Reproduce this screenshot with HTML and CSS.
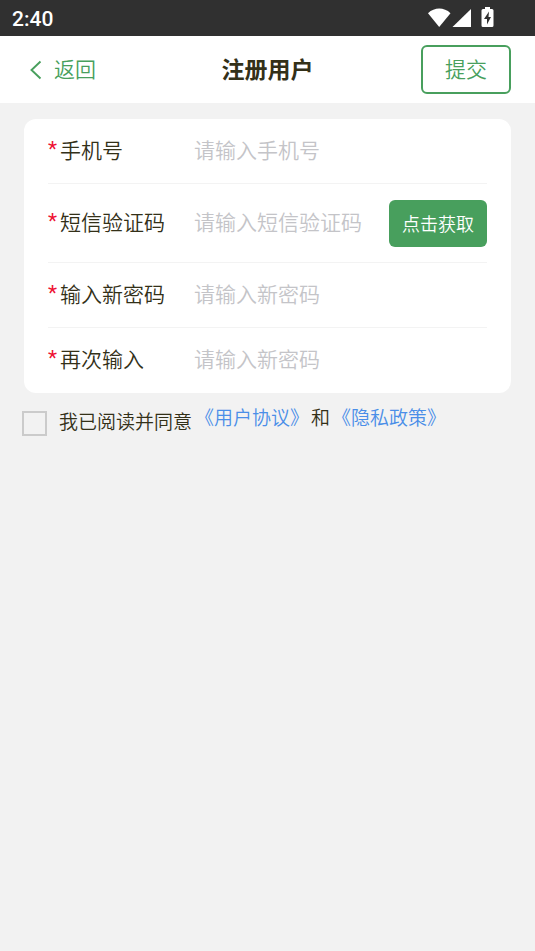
FILE: index.html
```html
<!DOCTYPE html>
<html lang="zh-CN">
<head>
<meta charset="utf-8">
<meta name="viewport" content="width=device-width, initial-scale=1">
<title>注册用户</title>
<link rel="stylesheet" href="styles.css">
</head>
<body>
<div class="status">
  <span class="clock">2:40</span>
  <svg class="status-icons" width="68" height="24" viewBox="0 0 68 24" fill="#fff" aria-hidden="true">
    <path d="M0 7.200C6.500 1 16 1 22.500 7.200L11.200 21z"/>
    <path d="M43 3v18H24.500z"/>
    <path fill-rule="evenodd" d="M57 1h5v2h2q1.500 0 1.500 1.500v15q0 1.500-1.500 1.500h-9q-1.500 0-1.500-1.500v-15Q53.500 3 55 3h2zM61 5.500l-5 7.500h3v5.500l4-7.500h-2.500z"/>
  </svg>
</div>
<form class="page">
  <header class="navbar">
    <a class="back" href="#">
      <svg width="12" height="20" viewBox="0 0 12 20" fill="none" stroke="currentColor" stroke-width="1.900" aria-hidden="true"><path d="M10.500 1.500L1.500 10l9 8.500"/></svg>
      <span class="back-text">返回</span>
    </a>
    <h1 class="title">注册用户</h1>
    <button class="submit" type="submit">提交</button>
  </header>
  <main>
    <div class="card">
      <div class="row">
        <label class="label" for="phone"><span class="star">*</span>手机号</label>
        <input class="field" id="phone" type="tel" placeholder="请输入手机号">
      </div>
      <div class="row">
        <label class="label" for="code"><span class="star">*</span>短信验证码</label>
        <input class="field" id="code" type="text" placeholder="请输入短信验证码">
        <button class="get-code" type="button">点击获取</button>
      </div>
      <div class="row">
        <label class="label" for="password"><span class="star">*</span>输入新密码</label>
        <input class="field" id="password" type="password" placeholder="请输入新密码">
      </div>
      <div class="row">
        <label class="label" for="repeat"><span class="star">*</span>再次输入</label>
        <input class="field" id="repeat" type="password" placeholder="请输入新密码">
      </div>
    </div>
    <div class="agreement">
      <input class="check" id="agree" type="checkbox">
      <label class="agree-text" for="agree">我已阅读并同意</label>
      <div class="links"><a href="#">《用户协议》</a><span>和</span><a href="#">《隐私政策》</a></div>
    </div>
  </main>
</form>
</body>
</html>
```

FILE: styles.css
```css
* {
  box-sizing: border-box;
}

body {
  margin: 0;
  min-height: 100vh;
  background: #f2f2f2;
  color: #333018;
  font-family: "Noto Sans CJK SC", sans-serif;
  font-size: 21px;
  font-weight: 350;
}

a {
  text-decoration: none;
}

button,
input {
  font: inherit;
}

.status {
  display: flex;
  align-items: center;
  justify-content: space-between;
  height: 36px;
  padding: 0 39px 0 12px;
  background: #303030;
  color: #fff;
}

.clock {
  padding-top: 2px;
  font: 500 21px/36px Roboto, sans-serif;
}

.navbar {
  display: grid;
  grid-template-columns: 1fr auto 1fr;
  align-items: center;
  padding: 9px 24px;
  background: #fff;
}

.back {
  display: flex;
  align-items: center;
  gap: 12px;
  padding-left: 6px;
  color: #489f5d;
}

.title,
.back-text {
  padding-bottom: 4px;
}

.title {
  margin: 0;
  font-size: 23px;
  font-weight: 700;
}

.submit {
  justify-self: end;
  height: 49px;
  padding: 0 22px 4px;
  border: 2px solid #489f5d;
  border-radius: 6px;
  background: #fff;
  color: #489f5d;
  line-height: 40px;
}

.card {
  margin: 16px 24px 0;
  padding: 0 24px;
  border-radius: 12px;
  background: #fff;
}

.row {
  display: flex;
  align-items: center;
  min-height: 65px;
  padding: 16px 0 15px;
  border-bottom: 1px solid #f3f3f3;
}

.row:last-child {
  border-bottom: 0;
}

.label {
  display: flex;
  flex: 0 0 146px;
  padding-bottom: 6px;
  line-height: 26px;
}

.star {
  width: 12px;
  color: #ee1133;
  font-family: Roboto, sans-serif;
  font-weight: 400;
}

.field {
  flex: 1;
  min-width: 0;
  height: 32px;
  padding: 0 0 6px;
  border: 0;
  outline: 0;
  background: none;
  color: inherit;
}

.field::placeholder {
  color: #c4c4c8;
  opacity: 1;
}

.get-code {
  height: 47px;
  padding: 0 13px 2px;
  border: 0;
  border-radius: 6px;
  background: #489f5d;
  color: #fff;
  font-size: 18px;
}

.agreement {
  display: flex;
  align-items: flex-end;
  padding: 9px 22px;
  font-size: 19px;
  line-height: 30px;
}

.check {
  appearance: none;
  width: 25px;
  height: 25px;
  margin: 0 12px 0 0;
  border: 2px solid #cbcbcb;
  background: #f2f2f2;
}

.check:checked {
  background: #489f5d;
}

.links {
  display: flex;
  gap: 2px;
  padding: 0 0 4px 3px;
}

.links a {
  color: #4a8ee8;
}
```
